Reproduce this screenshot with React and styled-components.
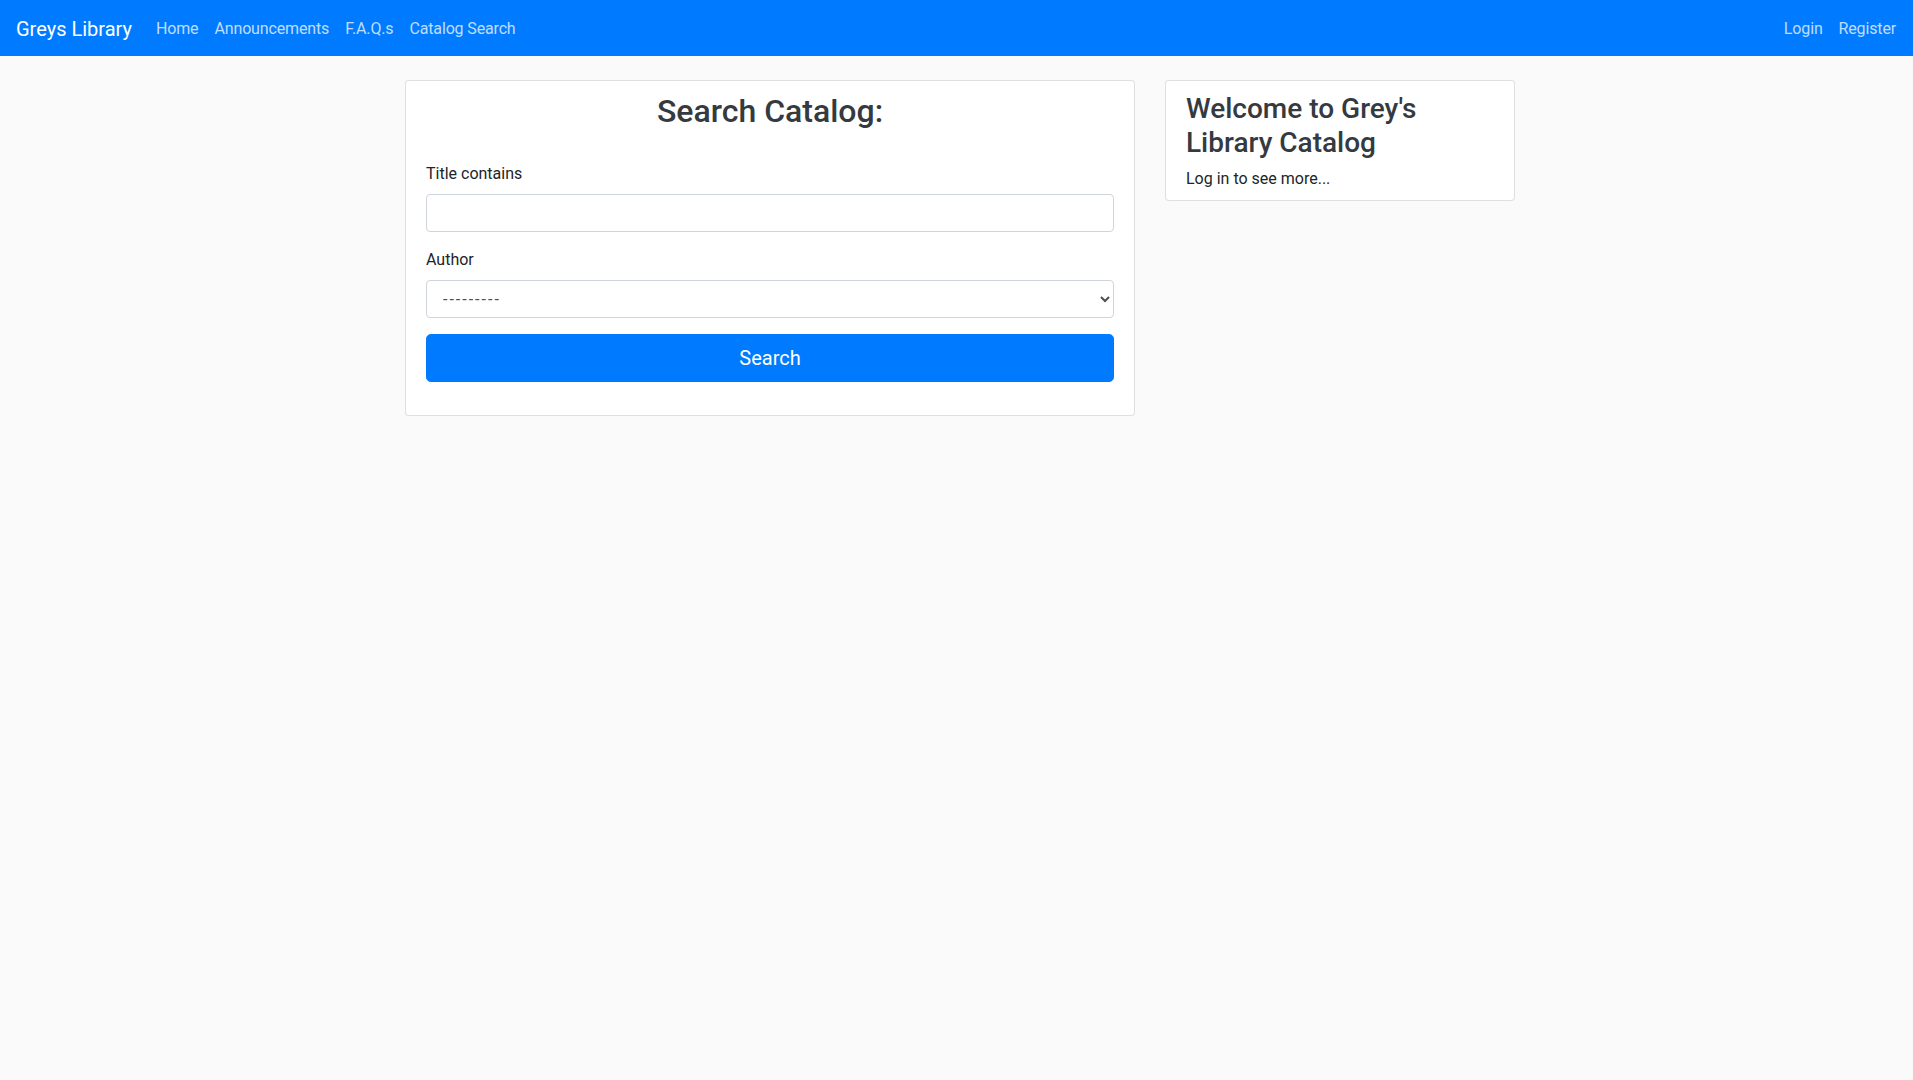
import React from "react";
import styled, { createGlobalStyle } from "styled-components";

const GlobalStyle = createGlobalStyle`
  html, body {
    margin: 0;
    padding: 0;
    overflow: hidden;
    background: #fafafa;
  }
  body {
    font-family: "Segoe UI", Roboto, "Helvetica Neue", "Liberation Sans", sans-serif;
    font-size: 16px;
    line-height: 1.5;
    color: #212529;
  }
  * {
    box-sizing: border-box;
  }
`;

const Page = styled.div`
  width: 1920px;
  min-height: 1080px;
  background: #fafafa;
`;

const Navbar = styled.nav`
  display: flex;
  align-items: center;
  height: 56px;
  padding: 8px 16px;
  background-color: #007bff;
`;

const Brand = styled.a`
  display: inline-block;
  padding: 6px 0 4px;
  margin-right: 16px;
  font-size: 20px;
  line-height: 30px;
  color: #fff;
  text-decoration: none;
  white-space: nowrap;
`;

const NavList = styled.ul`
  display: flex;
  list-style: none;
  margin: 0;
  padding: 0;
  margin-left: ${(props) => (props.right ? "auto" : "0")};
`;

const NavLink = styled.a`
  display: block;
  padding: 9px 8px 7px;
  line-height: 24px;
  letter-spacing: -0.15px;
  color: rgba(255, 255, 255, 0.75);
  text-decoration: none;
  white-space: nowrap;
`;

const Container = styled.div`
  width: 100%;
  max-width: 1140px;
  margin: 24px auto 0;
  padding: 0 15px;
`;

const Row = styled.div`
  display: grid;
  grid-template-columns: 730px 350px;
  column-gap: 30px;
  align-items: start;
`;

const Card = styled.div`
  background: #fff;
  border: 1px solid rgba(0, 0, 0, 0.125);
  border-radius: 4px;
  padding: ${(props) => props.pad || "10px 20px"};
`;

const Title = styled.h2`
  margin: 0 0 32px;
  font-size: 32px;
  line-height: 1.2;
  font-weight: 500;
  text-align: center;
  color: #343a40;
`;

const WelcomeTitle = styled.h3`
  margin: 0 0 8px;
  font-size: 28px;
  line-height: 1.2;
  font-weight: 500;
  color: #343a40;
`;

const Text = styled.p`
  margin: 0;
  color: #212529;
`;

const FormGroup = styled.div`
  margin-bottom: 16px;
`;

const Label = styled.label`
  display: inline-block;
  margin-bottom: 8px;
  color: #212529;
`;

const Input = styled.input`
  display: block;
  width: 100%;
  height: 38px;
  padding: 6px 12px;
  font-family: inherit;
  font-size: 16px;
  line-height: 1.5;
  color: #495057;
  background: #fff;
  border: 1px solid #ced4da;
  border-radius: 4px;
  outline: none;
`;

const Select = styled.select`
  display: block;
  width: 100%;
  height: 38px;
  padding: 6px 12px;
  font-family: inherit;
  font-size: 16px;
  line-height: 1.5;
  letter-spacing: 2px;
  color: #495057;
  background: #fff;
  border: 1px solid #ced4da;
  border-radius: 4px;
  outline: none;
`;

const Button = styled.button`
  display: block;
  width: 100%;
  height: 48px;
  padding: 8px 16px;
  font-family: inherit;
  font-size: 20px;
  line-height: 1.5;
  color: #fff;
  background-color: #007bff;
  border: 1px solid #007bff;
  border-radius: 4.8px;
  cursor: pointer;
`;

export default function App() {
  const leftLinks = ["Home", "Announcements", "F.A.Q.s", "Catalog Search"];
  const rightLinks = ["Login", "Register"];

  return (
    <Page>
      <GlobalStyle />
      <Navbar>
        <Brand href="#">Greys Library</Brand>
        <NavList>
          {leftLinks.map((l) => (
            <li key={l}>
              <NavLink href="#">{l}</NavLink>
            </li>
          ))}
        </NavList>
        <NavList right>
          {rightLinks.map((l) => (
            <li key={l}>
              <NavLink href="#">{l}</NavLink>
            </li>
          ))}
        </NavList>
      </Navbar>

      <Container>
        <Row>
          <Card pad="11px 20px 33px">
            <Title>Search Catalog:</Title>
            <form onSubmit={(e) => e.preventDefault()}>
              <FormGroup>
                <Label htmlFor="title">Title contains</Label>
                <Input id="title" type="text" />
              </FormGroup>
              <FormGroup>
                <Label htmlFor="author">Author</Label>
                <Select id="author" defaultValue="">
                  <option value="">---------</option>
                </Select>
              </FormGroup>
              <Button type="submit">Search</Button>
            </form>
          </Card>

          <Card pad="11px 20px 9px">
            <WelcomeTitle>Welcome to Grey's Library Catalog</WelcomeTitle>
            <Text>Log in to see more...</Text>
          </Card>
        </Row>
      </Container>
    </Page>
  );
}
